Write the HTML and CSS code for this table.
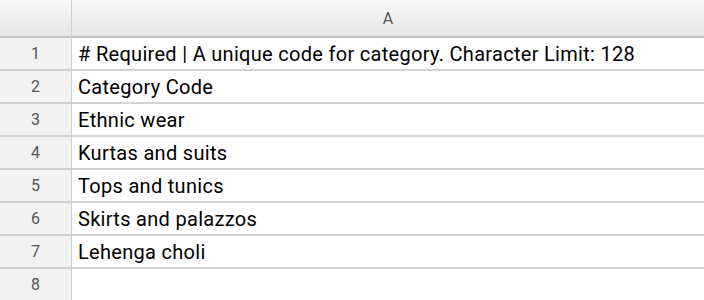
FILE: index.html
```html
<!DOCTYPE html>
<html>
<head>
<meta charset="utf-8">
<link rel="stylesheet" href="styles.css">
</head>
<body>
<div class="sheet">
  <div class="head corner"></div>
  <div class="head col">A</div>
  <div class="num">1</div><div class="cell"># Required | A unique code for category. Character Limit: 128</div>
  <div class="num">2</div><div class="cell">Category Code</div>
  <div class="num">3</div><div class="cell">Ethnic wear</div>
  <div class="num">4</div><div class="cell">Kurtas and suits</div>
  <div class="num">5</div><div class="cell">Tops and tunics</div>
  <div class="num">6</div><div class="cell">Skirts and palazzos</div>
  <div class="num">7</div><div class="cell">Lehenga choli</div>
  <div class="num">8</div><div class="cell"></div>
</div>
</body>
</html>
```
FILE: styles.css
```css
html, body { margin: 0; padding: 0; background: #fff; }
body { font-family: Roboto, "Liberation Sans", sans-serif; width: 704px; height: 300px; overflow: hidden; }
.sheet {
  display: grid;
  grid-template-columns: 72px 1fr;
  grid-template-rows: 38px repeat(8, 33px);
}
.head {
  background: linear-gradient(#f9f9f9, #e6e6e6);
  border-bottom: 2px solid #c4c4c4;
  box-sizing: border-box;
}
.corner { border-right: 1px solid #d0d0d0; }
.col {
  display: flex; align-items: center; justify-content: center;
  color: #555; font-size: 16px;
}
.num {
  background: #f2f2f2;
  border-right: 1px solid #d0d0d0;
  border-bottom: 2px solid #cfcfcf;
  box-sizing: border-box;
  display: flex; align-items: center; justify-content: center;
  color: #555; font-size: 16px;
}
.cell {
  border-bottom: 2px solid #d4d4d4;
  box-sizing: border-box;
  display: flex; align-items: center;
  padding-left: 6px;
  font-size: 20px; letter-spacing: 0.3px; color: #000;
  white-space: nowrap;
}
```
